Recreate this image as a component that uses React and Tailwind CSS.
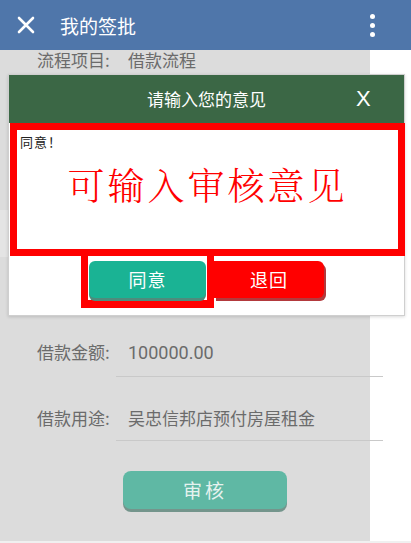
import React from 'react';

const CJK = '[font-family:"Noto_Sans_CJK_SC","Noto_Sans",sans-serif]';

export default function App() {
  return (
    <div className={`w-[411px] h-[543px] overflow-hidden bg-white ${CJK}`}>
      {/* top bar */}
      <div className="h-[50px] bg-[#4f76aa] flex items-center text-white">
        <svg width="18" height="18" viewBox="0 0 18 18" className="ml-[17px]">
          <path d="M2 2L16 16M16 2L2 16" stroke="white" strokeWidth="2.6" strokeLinecap="round" />
        </svg>
        <span className="ml-[25px] text-[19px] leading-none">我的签批</span>
        <div className="ml-auto mr-[36px] flex flex-col gap-[4px]">
          <span className="w-[5px] h-[5px] rounded-full bg-white" />
          <span className="w-[5px] h-[5px] rounded-full bg-white" />
          <span className="w-[5px] h-[5px] rounded-full bg-white" />
        </div>
      </div>

      {/* page content under the overlay */}
      <div className="relative w-[370px] h-[491px] bg-[#dcdcdc] text-[#6b6b6b] text-[17px]">
        <div className="flex h-[20px] items-center pl-[37px]">
          <span className="w-[91px]">流程项目:</span>
          <span>借款流程</span>
        </div>
        <div className="mt-[140px] h-[47px] bg-[#e4e4e4]" />

        <div className="mt-[83px] flex h-[24px] items-center pl-[37px]">
          <span className="w-[91px]">借款金额:</span>
          <span className="[font-family:'Roboto',sans-serif] text-[18px]">100000.00</span>
        </div>
        <div className="mt-[12px] ml-[116px] w-[267px] h-px bg-[#c9c9c9]" />

        <div className="mt-[29px] flex h-[24px] items-center pl-[37px]">
          <span className="w-[91px]">借款用途:</span>
          <span>吴忠信邦店预付房屋租金</span>
        </div>
        <div className="mt-[10px] ml-[116px] w-[267px] h-px bg-[#c9c9c9]" />

        <div className="mt-[30px] ml-[123px] w-[164px] h-[38px] rounded-[8px] bg-[#5fb8a4] shadow-[0_3px_0_#74958c] flex items-center justify-center text-[#e6f2ef] text-[19px] tracking-[3px]">
          审核
        </div>

        {/* dialog */}
        <div className="absolute left-[8px] top-[24px] w-[397px] h-[242px] bg-white border border-[#cfcfcf] shadow-[0_1px_3px_rgba(0,0,0,0.15)]">
          <div className="h-[48px] bg-[#3b6745] flex items-center justify-center relative text-white">
            <span className="text-[17px]">请输入您的意见</span>
            <span className="absolute left-[347px] top-[13px] text-[22px] leading-none [font-family:'Liberation_Sans',sans-serif]">X</span>
          </div>
          <div className="ml-[1px] w-[395px] h-[133px] border-[7px] border-[#ff0000] bg-white relative">
            <div className="pl-[3px] pt-[5px] text-[13px] text-[#222] leading-none tracking-[1px]">同意！</div>
            <div className="mt-[18px] text-center text-[#ff0000] text-[37px] font-light tracking-[3px] leading-none [font-family:'Noto_Serif_CJK_SC','Noto_Sans_CJK_SC',serif]">
              可输入审核意见
            </div>
          </div>
          <div className="flex pl-[72px]">
            <div className="w-[133px] h-[52px] border-x-[7px] border-b-[8px] border-t-0 border-[#ff0000] pt-[5px] pl-[1px]">
              <div className="w-[117px] h-[37px] rounded-[6px] bg-[#1ab394] shadow-[0_3px_0_#4d8c7c] flex items-center justify-center text-white text-[18px] tracking-[1px]">
                同意
              </div>
            </div>
            <div className="mt-[5px] w-[110px] h-[37px] rounded-r-[6px] bg-[#ff0000] shadow-[2px_3px_0_#b3393c] flex items-center justify-center text-white text-[18px] tracking-[1px]">
              退回
            </div>
          </div>
        </div>
      </div>
      <div className="h-[2px] bg-[#f0f0f0]" />
    </div>
  );
}
